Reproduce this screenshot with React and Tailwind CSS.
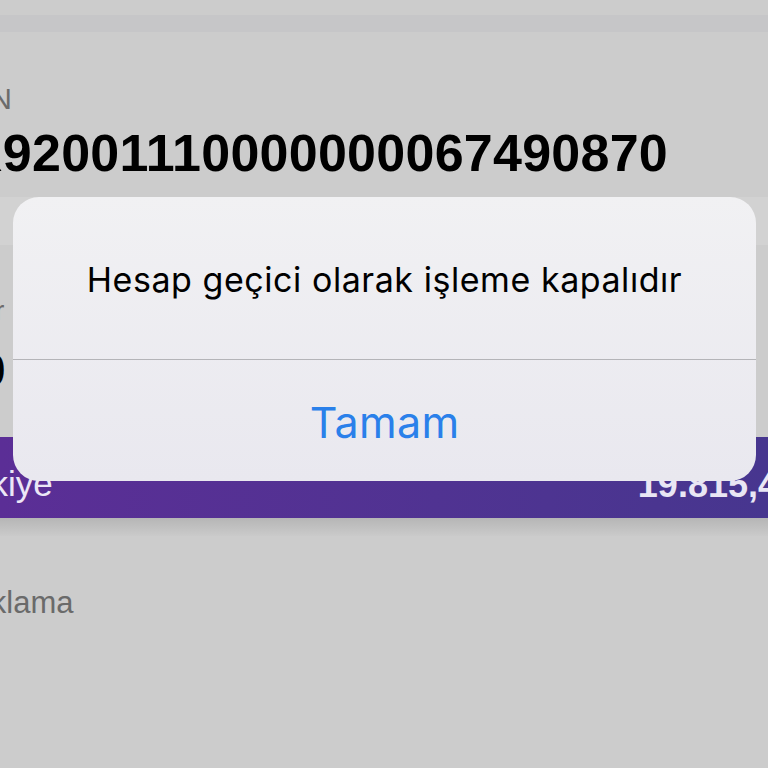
import React from "react";

// background screen (account detail) dimmed behind an iOS style alert
export default function App() {
  return (
    <div className="relative w-[768px] h-[768px] overflow-hidden bg-[#cccccc] font-['Liberation_Sans',sans-serif]">
      <div className="h-[15px]" />
      <div className="h-[17px] bg-[#c6c6c8]" />

      {/* IBAN block */}
      <div className="h-[165px] pt-[52px]">
        <div className="ml-[-58px] text-[30px] leading-[30px] text-[#6b6b6b]">IBAN</div>
        <div className="ml-[-67px] mt-[13px] text-[52px] leading-[52px] font-bold text-black tracking-[0.25px] whitespace-nowrap">
          TR92001110000000067490870
        </div>
      </div>
      <div className="h-[48px] bg-[#d2d2d2]" />

      {/* balance block */}
      <div className="h-[192px] pt-[52px]">
        <div className="ml-[-60px] text-[28px] leading-[28px] text-[#6b6b6b]">Tutar</div>
        <div className="ml-[-20px] mt-[22px] text-[46px] leading-[46px] font-bold text-black">0</div>
      </div>

      {/* purple account bar */}
      <div className="h-[81px] bg-gradient-to-r from-[#5b2e96] to-[#47368f] flex items-center justify-between pt-[14px]">
        <div className="ml-[-62px] text-[35px] text-[#ece6f6]">Türkiye</div>
        <div className="mr-[-30px] text-[36px] font-bold text-[#e9e6f4]">19.815,45</div>
      </div>
      <div className="h-[18px] bg-gradient-to-b from-[#b6b6b6] to-[#cacaca]" />

      {/* description */}
      <div className="pt-[51px]">
        <div className="ml-[-54px] text-[31px] leading-[31px] text-[#6a6a6a]">Açıklama</div>
      </div>

      {/* alert */}
      <div className="absolute left-[13px] top-[197px] w-[743px] h-[284px] rounded-[26px] bg-gradient-to-b from-[#f1f1f3] to-[#e9e8ef] flex flex-col font-['Inter',sans-serif]">
        <div className="h-[162px] flex items-center justify-center pt-[2px]">
          <span className="text-[34px] text-black tracking-[0.55px]">Hesap geçici olarak işleme kapalıdır</span>
        </div>
        <div className="h-px bg-[#b4b4b8]" />
        <div className="flex-1 flex items-center justify-center pt-[3px]">
          <span className="text-[43px] text-[#2a80ea] tracking-[0.3px]">Tamam</span>
        </div>
      </div>
    </div>
  );
}
